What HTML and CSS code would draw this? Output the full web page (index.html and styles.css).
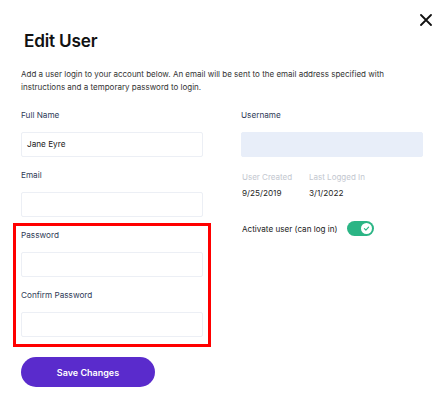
FILE: index.html
```html
<!DOCTYPE html>
<html lang="en">
<head>
<meta charset="utf-8">
<title>Edit User</title>
<link rel="stylesheet" href="styles.css">
</head>
<body>
<div class="modal">
  <div class="topbar">
    <button class="close" aria-label="Close">
      <svg width="12" height="12" viewBox="0 0 12 12"><path d="M1 1L11 11M11 1L1 11" stroke="#111" stroke-width="1.8" stroke-linecap="round"/></svg>
    </button>
  </div>
  <h1 class="title">Edit User</h1>
  <p class="desc">Add a user login to your account below. An email will be sent to the email address specified with instructions and a temporary password to login.</p>
  <div class="grid">
    <div class="col">
      <div class="field">
        <label class="label">Full Name</label>
        <div class="input">Jane Eyre</div>
      </div>
      <div class="field">
        <label class="label">Email</label>
        <div class="input"></div>
      </div>
      <div class="highlight">
        <div class="field">
          <label class="label">Password</label>
          <div class="input"></div>
        </div>
        <div class="field last">
          <label class="label">Confirm Password</label>
          <div class="input"></div>
        </div>
      </div>
      <button class="save">Save Changes</button>
    </div>
    <div class="col">
      <div class="field">
        <label class="label">Username</label>
        <div class="input filled"></div>
      </div>
      <div class="meta">
        <div class="meta-item created">
          <div class="meta-label">User Created</div>
          <div class="meta-value">9/25/2019</div>
        </div>
        <div class="meta-item">
          <div class="meta-label">Last Logged In</div>
          <div class="meta-value">3/1/2022</div>
        </div>
      </div>
      <div class="activate">
        <span class="activate-text">Activate user (can log in)</span>
        <span class="toggle">
          <span class="knob">
            <svg width="7" height="7" viewBox="0 0 8 8"><path d="M1.6 4.2L3.3 5.8L6.4 2.4" fill="none" stroke="#2bb585" stroke-width="1.3" stroke-linecap="round" stroke-linejoin="round"/></svg>
          </span>
        </span>
      </div>
    </div>
  </div>
</div>
</body>
</html>
```

FILE: styles.css
```css
* { box-sizing: border-box; }
html, body { margin: 0; padding: 0; background: #fff; }
body {
  font-family: Inter, "Noto Sans", "Liberation Sans", sans-serif;
  color: #222;
}
.modal {
  width: 447px;
  height: 406px;
  padding: 0 24px 0 21px;
}
.topbar {
  display: flex;
  justify-content: flex-end;
  padding-top: 14px;
  margin-right: -9px;
  height: 26px;
}
.close {
  width: 12px;
  height: 12px;
  padding: 0;
  border: 0;
  background: none;
  display: block;
}
.close svg { display: block; }
.title {
  margin: 4px 0 0 3px;
  font-size: 17.2px;
  line-height: 22px;
  font-weight: 600;
  color: #111;
  letter-spacing: -0.2px;
}
.desc {
  margin: 16px 0 0 0;
  font-size: 8px;
  line-height: 13px;
  color: #333;
  width: 400px;
}
.grid {
  display: grid;
  grid-template-columns: 182px 182px;
  column-gap: 38px;
  margin-top: 15.5px;
}
.col { display: flex; flex-direction: column; align-items: stretch; }
.field { margin-bottom: 12.5px; }
.field.last { margin-bottom: 0; }
.label {
  display: block;
  font-size: 8.2px;
  line-height: 10px;
  color: #2f3b57;
  margin-bottom: 12.5px;
}
.input {
  height: 25px;
  border: 1px solid #eceff5;
  border-radius: 2px;
  background: #fff;
  font-size: 8.2px;
  line-height: 23px;
  padding-left: 5px;
  color: #1a1a1a;
}
.input.filled { background: #e8eef9; border-color: #e8eef9; }
.highlight {
  margin: -6.5px -8px 0 -8px;
  border: 3px solid #ff0000;
  padding: 3.5px 5px 7px 5px;
}
.save {
  margin-top: 10px;
  width: 134px;
  height: 30px;
  border: 0;
  border-radius: 15px;
  background: #5a2bcc;
  color: #fff;
  font-family: Inter, "Noto Sans", "Liberation Sans", sans-serif;
  font-size: 9px;
  font-weight: 600;
  padding: 0;
}
.meta {
  display: flex;
  margin-top: 2.5px;
  padding-left: 1px;
}
.meta-item.created { width: 67px; }
.meta-label {
  font-size: 8px;
  line-height: 10px;
  color: #c3c7cf;
}
.meta-value {
  margin-top: 6px;
  font-size: 8.2px;
  line-height: 10px;
  color: #1f1f1f;
}
.activate {
  display: flex;
  align-items: center;
  margin-top: 23px;
  padding-left: 1px;
}
.activate-text {
  font-size: 8.1px;
  line-height: 10px;
  color: #222;
}
.toggle {
  margin-left: 10px;
  width: 27px;
  height: 15px;
  border-radius: 8px;
  background: #2bb585;
  display: flex;
  align-items: center;
  justify-content: flex-end;
  padding-right: 2px;
}
.knob {
  width: 11px;
  height: 11px;
  border-radius: 50%;
  background: #fff;
  display: flex;
  align-items: center;
  justify-content: center;
}
.knob svg { display: block; }
```
